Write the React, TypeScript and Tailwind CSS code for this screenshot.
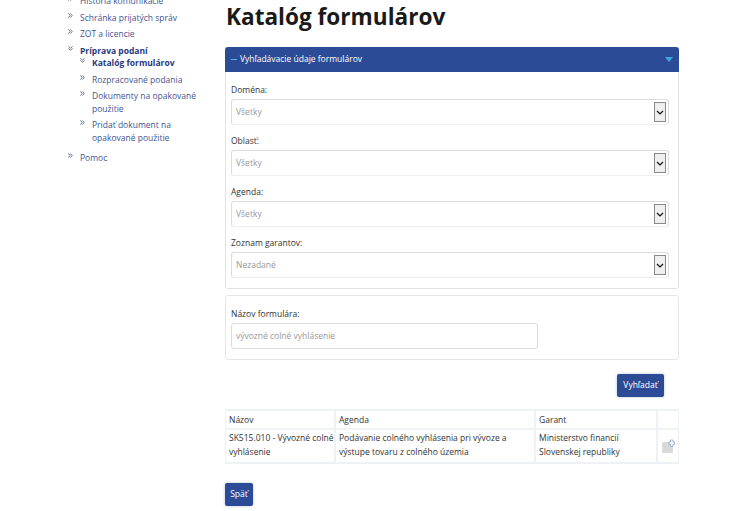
const FONT = "font-['Open_Sans',sans-serif]";

function Bullet({ open }: { open?: boolean }) {
  return (
    <svg viewBox="0 0 6 6" className="absolute left-[2px] top-[1px] h-[5px] w-[5px]" fill="none" stroke="#4a5a80" strokeWidth="1">
      {open ? (
        <path d="M0.5 0.5 L3 2.5 L5.5 0.5 M0.5 3 L3 5 L5.5 3" />
      ) : (
        <path d="M0.5 0.5 L2.5 3 L0.5 5.5 M3 0.5 L5 3 L3 5.5" />
      )}
    </svg>
  );
}

function NavItem({ label, bold, open }: { label: string; bold?: boolean; open?: boolean }) {
  return (
    <div className={`relative pl-[14px] text-[8.5px] leading-[12.5px] ${bold ? "font-bold text-[#1f3a7d]" : "text-[#3f5590]"}`}>
      <Bullet open={open} />
      {label}
    </div>
  );
}

function Sidebar() {
  return (
    <aside className="-mt-[5px] w-[225px] shrink-0 pl-[66px]">
      <div className="flex flex-col gap-[4px]">
        <NavItem label="História komunikácie" />
        <NavItem label="Schránka prijatých správ" />
        <NavItem label="ZOT a licencie" />
        <NavItem label="Príprava podaní" bold open />
      </div>
      <div className="ml-[12px] flex w-[122px] flex-col gap-[4px]">
        <NavItem label="Katalóg formulárov" bold open />
        <NavItem label="Rozpracované podania" />
        <NavItem label="Dokumenty na opakované použitie" />
        <NavItem label="Pridať dokument na opakované použitie" />
      </div>
      <div className="mt-[8px]">
        <NavItem label="Pomoc" />
      </div>
    </aside>
  );
}

function SelectField({ label, value }: { label: string; value: string }) {
  return (
    <div>
      <div className="text-[8.5px] leading-[12px] text-[#333]">{label}</div>
      <div className="mt-[3px] flex h-[26px] items-center justify-between rounded-[3px] border border-[#dcdcdc] border-b-[#eeeeee] pl-[4px] pr-[2px] text-[8.5px] text-[#999]">
        <span>{value}</span>
        <span className="flex h-[20px] w-[12px] items-center justify-center border border-[#8a8a8a] bg-[#efefef]">
          <svg viewBox="0 0 8 5" className="h-[5px] w-[8px]" fill="none" stroke="#111" strokeWidth="1.2">
            <path d="M1 1 L4 4 L7 1" />
          </svg>
        </span>
      </div>
    </div>
  );
}

function Button({ label, className }: { label: string; className: string }) {
  return (
    <button
      type="button"
      className={`h-[23px] rounded-[2px] bg-[#2c4b96] text-[8.5px] text-white shadow-[0_0_3px_rgba(100,130,190,0.5)] ${className}`}
    >
      {label}
    </button>
  );
}

const CELL = "border-r-2 border-[#eef2f7] pl-[3px]";
const BODY = "border-t-2 pb-[3px] pt-[1px]";

function Results() {
  return (
    <div className="mt-[12px] grid grid-cols-[111px_200px_122px_21px] border-y-2 border-[#eef2f7] text-[8.5px] leading-[14px] text-[#333]">
      <div className={`${CELL} flex h-[17px] items-center border-l`}>Názov</div>
      <div className={`${CELL} flex h-[17px] items-center`}>Agenda</div>
      <div className={`${CELL} flex h-[17px] items-center`}>Garant</div>
      <div className="h-[17px] border-r border-[#eef2f7]" />
      <div className={`${CELL} ${BODY} border-l`}>SK515.010 - Vývozné colné vyhlásenie</div>
      <div className={`${CELL} ${BODY}`}>Podávanie colného vyhlásenia pri vývoze a výstupe tovaru z colného územia</div>
      <div className={`${CELL} ${BODY}`}>Ministerstvo financií Slovenskej republiky</div>
      <div className="flex items-center justify-center border-r border-t-2 border-[#eef2f7]">
        <svg viewBox="0 0 13 14" className="h-[14px] w-[13px]">
          <path d="M0.5 3.5 H10.5 V13.5 H0.5 Z" fill="#d8d8d8" stroke="#cccccc" strokeWidth="0.5" />
          <path d="M7 3 H8.5 V1 H11 V3 H12.5 V5.5 H11 V7.5 H8.5 V5.5 H7 Z" fill="#f2f6fb" stroke="#86a2c8" strokeWidth="0.7" />
        </svg>
      </div>
    </div>
  );
}

export default function App() {
  return (
    <div className={`flex h-[511px] w-[748px] overflow-hidden bg-white ${FONT}`}>
      <Sidebar />
      <main className="w-[454px] shrink-0">
        <h1 className="mt-[1px] h-[46px] pl-[1px] text-[22.6px] font-bold leading-[32px] text-[#1a1a1a]">
          Katalóg formulárov
        </h1>
        <section className="rounded-[3px] border border-[#e2e2e2]">
          <div className="-mx-px -mt-px flex h-[25px] items-center justify-between rounded-t-[3px] bg-[#2c4b96] pl-[6px] pr-[6px] text-[8.5px] text-white">
            <span className="flex items-center gap-[3px]">
              <span className="h-[1.5px] w-[6px] bg-[#4fb4e6]" />
              Vyhľadávacie údaje formulárov
            </span>
            <svg viewBox="0 0 8 5" className="h-[5px] w-[8px]">
              <path d="M0 0 H8 L4 5 Z" fill="#3fa7dd" />
            </svg>
          </div>
          <div className="flex flex-col gap-[10px] pb-[10px] pl-[5px] pr-[9px] pt-[12px]">
            <SelectField label="Doména:" value="Všetky" />
            <SelectField label="Oblasť:" value="Všetky" />
            <SelectField label="Agenda:" value="Všetky" />
            <SelectField label="Zoznam garantov:" value="Nezadané" />
          </div>
        </section>
        <section className="mt-[6px] h-[65px] rounded-[3px] border border-[#e6e6e6] px-[5px] pt-[12px]">
          <div className="text-[8.5px] leading-[12px] text-[#333]">Názov formulára:</div>
          <div className="mt-[3px] flex h-[26px] w-[307px] items-center rounded-[3px] border border-[#dcdcdc] pl-[4px] text-[8.5px] text-[#999]">
            vývozné colné vyhlásenie
          </div>
        </section>
        <div className="mt-[14px] flex justify-end pr-[15px]">
          <Button label="Vyhľadať" className="w-[47px]" />
        </div>
        <Results />
        <Button label="Späť" className="mt-[19px] block w-[28px]" />
      </main>
    </div>
  );
}
